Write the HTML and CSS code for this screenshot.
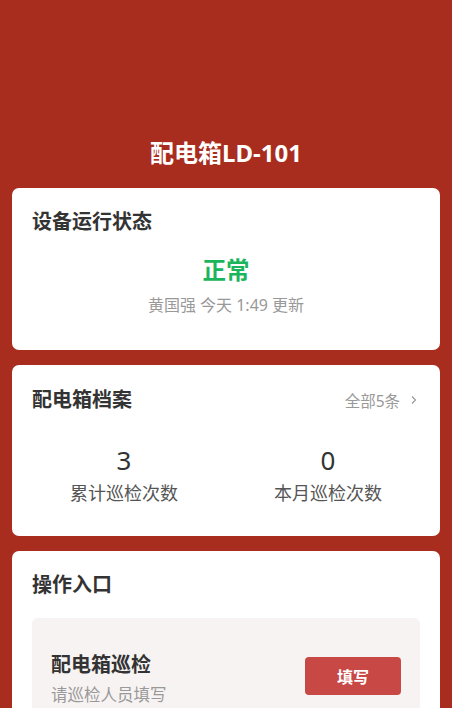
FILE: index.html
```html
<!DOCTYPE html>
<html lang="zh-CN">
<head>
<meta charset="utf-8">
<title>配电箱LD-101</title>
<link rel="stylesheet" href="styles.css">
</head>
<body>
<div class="page">
  <header class="header">
    <h1 class="page-title">配电箱LD-101</h1>
  </header>

  <section class="card status-card">
    <h2 class="card-title">设备运行状态</h2>
    <div class="status-value">正常</div>
    <div class="status-meta">黄国强 今天 1:49 更新</div>
  </section>

  <section class="card archive-card">
    <div class="card-head">
      <h2 class="card-title">配电箱档案</h2>
      <a class="more-link">全部5条
        <svg class="chev" width="8" height="12" viewBox="0 0 8 12"><path d="M2 2.5 L5.5 6 L2 9.5" fill="none" stroke="#999" stroke-width="1.2"/></svg>
      </a>
    </div>
    <div class="stats">
      <div class="stat">
        <div class="stat-num">3</div>
        <div class="stat-label">累计巡检次数</div>
      </div>
      <div class="stat">
        <div class="stat-num">0</div>
        <div class="stat-label">本月巡检次数</div>
      </div>
    </div>
  </section>

  <section class="card action-card">
    <h2 class="card-title">操作入口</h2>
    <div class="action-item">
      <div class="action-text">
        <div class="action-name">配电箱巡检</div>
        <div class="action-desc">请巡检人员填写</div>
      </div>
      <button class="action-btn">填写</button>
    </div>
  </section>
</div>
</body>
</html>
```

FILE: styles.css
```css
* { box-sizing: border-box; }
html, body {
  margin: 0;
  padding: 0;
  background: #a92d1e;
  font-family: "Noto Sans", "Noto Sans CJK SC", sans-serif;
  color: #333;
}
.page {
  padding: 0 12px;
  height: 708px;
  overflow: hidden;
}
.header {
  height: 188px;
  display: flex;
  align-items: flex-end;
  justify-content: center;
  padding-bottom: 18px;
}
.page-title {
  margin: 0;
  font-size: 24px;
  line-height: 34px;
  font-weight: 700;
  color: #fff;
}
.card {
  background: #fff;
  border-radius: 7px;
  padding: 20px 20px 0;
  margin-bottom: 15px;
}
.card-title {
  margin: 0;
  font-size: 20px;
  line-height: 28px;
  font-weight: 700;
  color: #333;
}
.status-card {
  height: 162px;
  text-align: center;
}
.status-card .card-title { text-align: left; }
.status-value {
  margin-top: 19px;
  font-size: 23.5px;
  line-height: 30px;
  font-weight: 700;
  color: #1bb55c;
}
.status-meta {
  margin-top: 9px;
  font-size: 16px;
  line-height: 22px;
  color: #999;
}
.archive-card {
  height: 171px;
}
.card-head {
  display: flex;
  justify-content: space-between;
  align-items: center;
  height: 30px;
}
.more-link {
  display: flex;
  align-items: center;
  gap: 10px;
  font-size: 15.5px;
  color: #999;
  padding-right: 2px;
}
.stats {
  display: grid;
  grid-template-columns: 1fr 1fr;
  margin: 28px -10px 0;
}
.stat { text-align: center; }
.stat-num {
  font-size: 26px;
  line-height: 34px;
  color: #333;
}
.stat-label {
  margin-top: 3px;
  font-size: 18px;
  line-height: 26px;
  color: #555;
}
.action-card {
  height: 200px;
}
.action-item {
  margin-top: 19px;
  background: #f7f3f2;
  border-radius: 6px;
  padding: 34px 19px 20px 19px;
  display: flex;
  justify-content: space-between;
  align-items: flex-start;
}
.action-name {
  font-size: 20px;
  line-height: 26px;
  font-weight: 700;
  color: #333;
}
.action-desc {
  margin-top: 5px;
  font-size: 16.5px;
  line-height: 24px;
  color: #999;
}
.action-btn {
  margin-top: 5px;
  width: 96px;
  height: 38px;
  border: none;
  border-radius: 4px;
  background: #c84846;
  color: #fff;
  font-family: inherit;
  font-size: 16px;
  font-weight: 700;
}
```
